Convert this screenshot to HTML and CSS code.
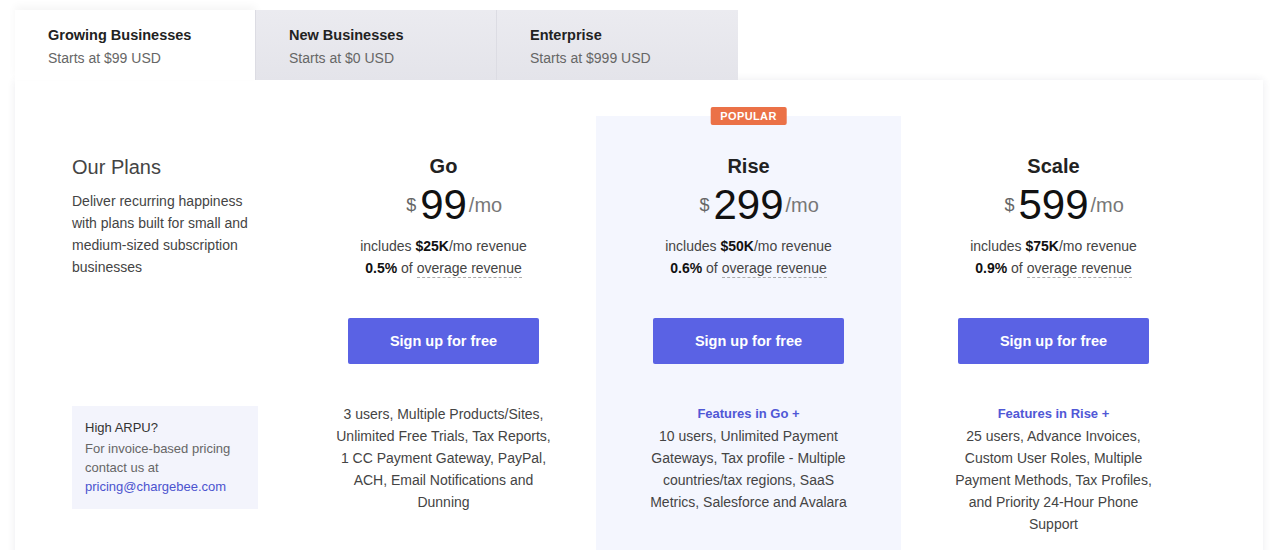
FILE: index.html
```html
<!DOCTYPE html>
<html>
<head>
<meta charset="utf-8">
<link rel="stylesheet" href="styles.css">
</head>
<body>
<div class="page">
  <div class="tabs">
    <div class="tab active">
      <div class="tab-title">Growing Businesses</div>
      <div class="tab-sub">Starts at $99 USD</div>
    </div>
    <div class="tab">
      <div class="tab-title">New Businesses</div>
      <div class="tab-sub">Starts at $0 USD</div>
    </div>
    <div class="tab last">
      <div class="tab-title">Enterprise</div>
      <div class="tab-sub">Starts at $999 USD</div>
    </div>
  </div>
  <div class="card">
    <div class="intro">
      <h2 class="intro-title">Our Plans</h2>
      <p class="intro-desc">Deliver recurring happiness with plans built for small and medium-sized subscription businesses</p>
      <div class="arpu">
        <div class="arpu-title">High ARPU?</div>
        <div class="arpu-text">For invoice-based pricing contact us at</div>
        <a class="arpu-link" href="#">pricing@chargebee.com</a>
      </div>
    </div>
    <div class="plan">
      <h3 class="plan-name">Go</h3>
      <div class="price"><span class="cur">$</span><span class="amt">99</span><span class="per">/mo</span></div>
      <div class="inc">includes <b>$25K</b>/mo revenue</div>
      <div class="inc"><b>0.5%</b> of <span class="dash">overage revenue</span></div>
      <a class="btn" href="#">Sign up for free</a>
      <div class="feat">3 users, Multiple Products/Sites, Unlimited Free Trials, Tax Reports, 1 CC Payment Gateway, PayPal, ACH, Email Notifications and Dunning</div>
    </div>
    <div class="plan popular">
      <span class="badge">POPULAR</span>
      <h3 class="plan-name">Rise</h3>
      <div class="price"><span class="cur">$</span><span class="amt">299</span><span class="per">/mo</span></div>
      <div class="inc">includes <b>$50K</b>/mo revenue</div>
      <div class="inc"><b>0.6%</b> of <span class="dash">overage revenue</span></div>
      <a class="btn" href="#">Sign up for free</a>
      <div class="feat"><div class="feat-head">Features in Go +</div>10 users, Unlimited Payment Gateways, Tax profile - Multiple countries/tax regions, SaaS Metrics, Salesforce and Avalara</div>
    </div>
    <div class="plan">
      <h3 class="plan-name">Scale</h3>
      <div class="price"><span class="cur">$</span><span class="amt">599</span><span class="per">/mo</span></div>
      <div class="inc">includes <b>$75K</b>/mo revenue</div>
      <div class="inc"><b>0.9%</b> of <span class="dash">overage revenue</span></div>
      <a class="btn" href="#">Sign up for free</a>
      <div class="feat"><div class="feat-head">Features in Rise +</div>25 users, Advance Invoices, Custom User Roles, Multiple Payment Methods, Tax Profiles, and Priority 24-Hour Phone Support</div>
    </div>
  </div>
</div>
</body>
</html>
```

FILE: styles.css
```css
* { box-sizing: border-box; }
html, body { margin: 0; padding: 0; background: #fff; }
body {
  font-family: "Liberation Sans", Arial, Helvetica, sans-serif;
  color: #333;
  overflow: hidden;
}
.page {
  padding: 10px 17px 0 15px;
}
.tabs {
  display: flex;
  height: 70px;
  position: relative;
  z-index: 2;
}
.tab {
  width: 241px;
  height: 70px;
  padding: 16px 0 0 33px;
  background: linear-gradient(#ebebf0, #e4e4ea);
  border-right: 1px solid #dcdce3;
}
.tab.last { border-right: none; }
.tab.active {
  background: #fff;
  box-shadow: 0 -4px 8px rgba(0,0,0,0.04);
}
.tab-title {
  font-size: 14.5px;
  font-weight: bold;
  color: #222;
  line-height: 18px;
}
.tab-sub {
  font-size: 14px;
  color: #666;
  line-height: 18px;
  margin-top: 5px;
}
.card {
  display: flex;
  width: 1248px;
  padding: 36px 57px 0 57px;
  height: 500px;
  background: #fff;
  box-shadow: 0 0 8px rgba(40,40,80,0.09);
  position: relative;
  z-index: 1;
}
.intro {
  width: 219px;
  padding-top: 37px;
}
.intro-title {
  margin: 0;
  font-size: 20px;
  font-weight: normal;
  color: #444;
  line-height: 28px;
}
.intro-desc {
  margin: 9px 0 0 0;
  font-size: 14px;
  line-height: 22px;
  color: #444;
  width: 190px;
}
.arpu {
  margin-top: 128px;
  width: 186px;
  background: #f3f4fc;
  padding: 11px 10px 13px 13px;
}
.arpu-title {
  font-size: 13px;
  color: #333;
  line-height: 22px;
}
.arpu-text {
  font-size: 13px;
  color: #666;
  line-height: 19px;
}
.arpu-link {
  display: block;
  font-size: 13px;
  color: #4b53cf;
  line-height: 19px;
  text-decoration: none;
}
.plan {
  width: 305px;
  padding-top: 36px;
  display: flex;
  flex-direction: column;
  align-items: center;
  text-align: center;
  position: relative;
}
.plan.popular {
  background: #f4f6fe;
}
.badge {
  position: absolute;
  top: -9px;
  left: 50%;
  transform: translateX(-50%);
  background: #eb7147;
  color: #fff;
  font-size: 11px;
  font-weight: bold;
  letter-spacing: 0.4px;
  line-height: 18px;
  height: 18px;
  padding: 0 10px;
  border-radius: 2px;
}
.plan-name {
  margin: 0;
  font-size: 20px;
  font-weight: bold;
  color: #222;
  line-height: 28px;
}
.price {
  display: grid;
  grid-template-columns: 1fr auto 1fr;
  align-items: center;
  width: 100%;
  height: 50px;
}
.cur {
  justify-self: end;
  font-size: 18px;
  color: #666;
  margin-right: 4px;
}
.amt {
  font-size: 42px;
  color: #111;
  line-height: 50px;
}
.per {
  justify-self: start;
  font-size: 20px;
  color: #777;
  margin-left: 2px;
}
.inc {
  font-size: 14px;
  line-height: 22px;
  color: #444;
}
.inc b { color: #111; }
.price + .inc { margin-top: 5px; }
.dash {
  border-bottom: 1px dashed #aaa;
  padding-bottom: 1px;
}
.btn {
  display: flex;
  align-items: center;
  justify-content: center;
  margin-top: 39px;
  width: 191px;
  height: 46px;
  background: #5a62e4;
  color: #fff;
  font-size: 14.5px;
  font-weight: bold;
  text-decoration: none;
  border-radius: 2px;
}
.feat {
  margin-top: 39px;
  width: 220px;
  font-size: 14px;
  line-height: 22px;
  color: #444;
}
.feat-head {
  color: #5058d6;
  font-weight: bold;
  font-size: 13px;
}
```
